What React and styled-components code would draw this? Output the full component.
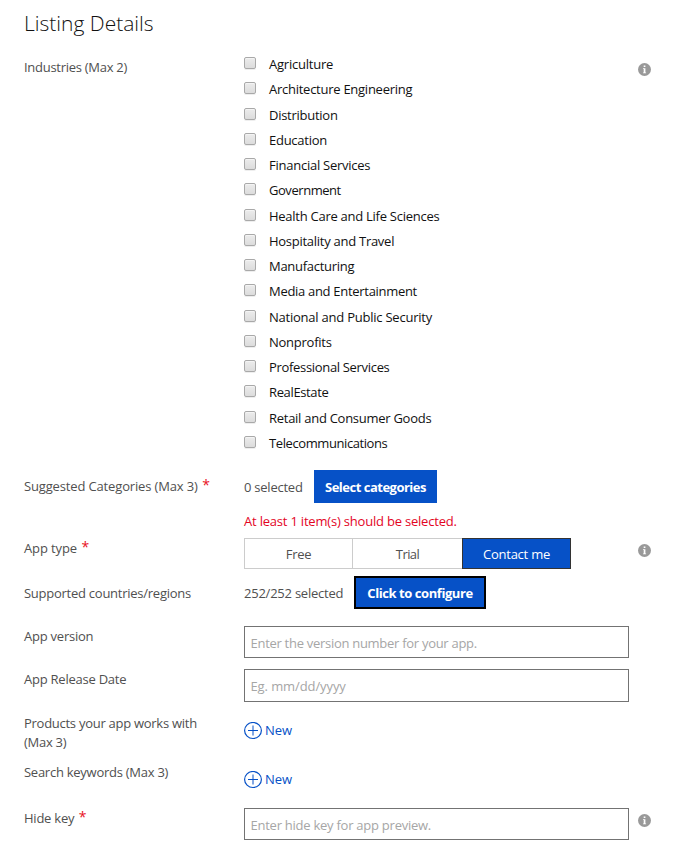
import React from 'react';
import styled, { createGlobalStyle } from 'styled-components';

const GlobalStyle = createGlobalStyle`
  *, *::before, *::after { box-sizing: border-box; }
  body { margin: 0; background: #fff; }
`;

const Page = styled.main`
  width: 673px;
  height: 858px;
  padding-left: 24px;
  overflow: hidden;
  background: #fff;
  color: #505050;
  font: 13px/19px "Open Sans", "Noto Sans", sans-serif;
`;

const Heading = styled.h1`
  margin: 0;
  height: 51px;
  padding-top: 8px;
  font-size: 21px;
  line-height: 30px;
  font-weight: 300;
  letter-spacing: 0;
  color: #111;
`;

const Row = styled.section`
  display: grid;
  grid-template-columns: 220px 385px 1fr;
  align-items: start;
  height: ${(p) => p.$height}px;
`;

const Label = styled.div`
  display: flex;
  padding-top: ${(p) => p.$top}px;
  white-space: pre-line;
`;

const Text = styled.span`
  letter-spacing: ${(p) => p.$track ?? -0.24}px;
  white-space: pre;
`;

const Star = styled.span`
  margin-left: 4.5px;
  margin-top: -2px;
  font-size: 14px;
  color: #e81123;
`;

const InfoSlot = styled.div`
  display: flex;
  padding: ${(p) => p.$top}px 0 0 9px;
`;

const CheckList = styled.ul`
  list-style: none;
  margin: -0.15px 0 0;
  padding: 0;
`;

const CheckItem = styled.li`
  display: flex;
  align-items: center;
  height: 25.28px;
  color: #111;

  ${Text} {
    margin-top: 2px;
  }
`;

const CheckBox = styled.input`
  appearance: none;
  flex: none;
  width: 12px;
  height: 12px;
  margin: 0 13px 1px 0;
  border: 1px solid #a9a9a9;
  border-radius: 2px;
  background: linear-gradient(#ececec, #dcdcdc);
  box-shadow: inset 0 1px 0 #f4f4f4, 0 1px 0 #eee;
`;

const Inline = styled.div`
  display: flex;
  align-items: center;
`;

const Count = styled.div`
  width: ${(p) => p.$width}px;
  padding-top: 1px;
`;

const Button = styled.button`
  width: ${(p) => p.$width}px;
  height: 33px;
  padding: 1px 0 0;
  border: 2px solid ${(p) => (p.$focused ? '#000' : '#0651c7')};
  background: #0651c7;
  color: #fff;
  font: bold 13px/19px "Open Sans", "Noto Sans", sans-serif;
`;

const ErrorText = styled.p`
  margin: 9px 0 0;
  color: #e3051f;
`;

const Segments = styled.div`
  display: grid;
  grid-template-columns: 108px 110px 109px;
`;

const Segment = styled.button`
  height: 31px;
  padding: 1px 0 0;
  border: 1px solid ${(p) => (p.$active ? '#333' : '#ccc')};
  border-right-width: ${(p) => (p.$active ? 1 : 0)}px;
  background: ${(p) => (p.$active ? '#0651c7' : '#fff')};
  color: ${(p) => (p.$active ? '#fff' : '#505050')};
  font: inherit;
`;

const Input = styled.input`
  width: 385px;
  height: ${(p) => p.$height ?? 32}px;
  padding: 1px 6px 0 5.5px;
  border: 1px solid #737373;
  border-radius: 0;
  background: #fff;
  font: inherit;
  letter-spacing: ${(p) => p.$track}px;
  outline: none;
  &::placeholder { color: #a6a6a6; opacity: 1; }
`;

const AddLink = styled.a`
  display: flex;
  align-items: center;
  gap: 3px;
  height: 19px;
  margin-top: ${(p) => p.$top}px;
  color: #0651c7;
`;

const Info = ({ top }) => (
  <InfoSlot $top={top}>
    <svg width="13" height="13" viewBox="0 0 13 13" aria-label="Info">
      <circle cx="6.5" cy="6.5" r="6.5" fill="#999" />
      <path d="M5.7 2.5h1.7v1.6H5.7zM5 5.2h2.4v4.2h.7v.9H5v-.9h.7V6.1H5z" fill="#fff" />
    </svg>
  </InfoSlot>
);

const Add = ({ top }) => (
  <AddLink $top={top}>
    <svg width="18" height="18" viewBox="0 0 18 18" fill="none" stroke="#0651c7">
      <ellipse cx="9" cy="8.5" rx="8.4" ry="8" strokeWidth="1.2" />
      <path d="M4 8.5h10" />
      <path d="M9 3.5v10" />
    </svg>
    <Text $track={-0.05}>New</Text>
  </AddLink>
);

const Field = ({ label, track, top, required }) => (
  <Label $top={top}>
    <Text $track={track}>{label}</Text>
    {required && <Star>*</Star>}
  </Label>
);

const industries = [
  ['Agriculture', -0.227],
  ['Architecture Engineering', -0.26],
  ['Distribution', -0.264],
  ['Education', -0.267],
  ['Financial Services', -0.25],
  ['Government', -0.45],
  ['Health Care and Life Sciences', -0.265],
  ['Hospitality and Travel', -0.27],
  ['Manufacturing', -0.28],
  ['Media and Entertainment', -0.3],
  ['National and Public Security', -0.23],
  ['Nonprofits', -0.25],
  ['Professional Services', -0.32],
  ['RealEstate', -0.36],
  ['Retail and Consumer Goods', -0.27],
  ['Telecommunications', -0.41],
];

export default function App() {
  return (
    <Page>
      <GlobalStyle />
      <Heading>Listing Details</Heading>

      <Row $height={419}>
        <Field label="Industries (Max 2)" track={-0.28} top={7} />
        <CheckList>
          {industries.map(([name, track]) => (
            <CheckItem key={name}>
              <CheckBox type="checkbox" aria-label={name} />
              <Text $track={track}>{name}</Text>
            </CheckItem>
          ))}
        </CheckList>
        <Info top={12} />
      </Row>

      <Row $height={68}>
        <Field label="Suggested Categories (Max 3)" track={-0.149} top={7} required />
        <div>
          <Inline>
            <Count $width={70}><Text>0 selected</Text></Count>
            <Button $width={123}><Text $track={-0.5}>Select categories</Text></Button>
          </Inline>
          <ErrorText><Text $track={-0.2}>At least 1 item(s) should be selected.</Text></ErrorText>
        </div>
      </Row>

      <Row $height={38}>
        <Field label="App type" track={-0.12} top={1} required />
        <Segments>
          <Segment><Text $track={-0.3}>Free</Text></Segment>
          <Segment><Text $track={-0.6}>Trial</Text></Segment>
          <Segment $active><Text>Contact me</Text></Segment>
        </Segments>
        <Info top={6} />
      </Row>

      <Row $height={50}>
        <Field label="Supported countries/regions" track={-0.255} top={8} />
        <Inline>
          <Count $width={110}><Text $track={-0.23}>252/252 selected</Text></Count>
          <Button $width={132} $focused><Text $track={-0.43}>Click to configure</Text></Button>
        </Inline>
      </Row>

      <Row $height={43}>
        <Field label="App version" track={-0.23} top={1} />
        <Input placeholder="Enter the version number for your app." $track={-0.285} />
      </Row>

      <Row $height={45}>
        <Field label="App Release Date" track={-0.24} top={1} />
        <Input placeholder="Eg. mm/dd/yyyy" $height={33} $track={-0.1} />
      </Row>

      <Row $height={48}>
        <Field label={'Products your app works with\n(Max 3)'} track={-0.27} top={0} />
        <Add top={7} />
      </Row>

      <Row $height={46}>
        <Field label="Search keywords (Max 3)" track={-0.26} top={1} />
        <Add top={8} />
      </Row>

      <Row $height={50}>
        <Field label="Hide key" top={1} required />
        <Input placeholder="Enter hide key for app preview." $track={-0.25} />
        <Info top={6} />
      </Row>
    </Page>
  );
}
